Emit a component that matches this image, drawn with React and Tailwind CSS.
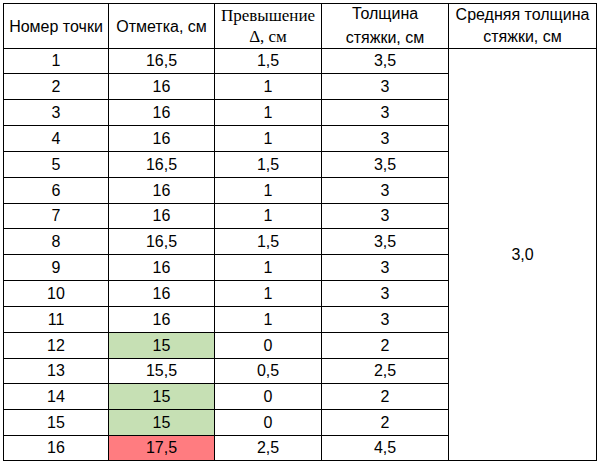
import React from "react";

// Row data: point number, elevation, excess, screed thickness, highlight
const rows = [
  ["1", "16,5", "1,5", "3,5", null],
  ["2", "16", "1", "3", null],
  ["3", "16", "1", "3", null],
  ["4", "16", "1", "3", null],
  ["5", "16,5", "1,5", "3,5", null],
  ["6", "16", "1", "3", null],
  ["7", "16", "1", "3", null],
  ["8", "16,5", "1,5", "3,5", null],
  ["9", "16", "1", "3", null],
  ["10", "16", "1", "3", null],
  ["11", "16", "1", "3", null],
  ["12", "15", "0", "2", "green"],
  ["13", "15,5", "0,5", "2,5", null],
  ["14", "15", "0", "2", "green"],
  ["15", "15", "0", "2", "green"],
  ["16", "17,5", "2,5", "4,5", "red"],
];

const cell =
  "flex items-center justify-center border-r border-b border-black text-center";

export default function App() {
  return (
    <div className="min-h-[463px] w-[600px] bg-white pt-[3px] pl-[3px] font-['Liberation_Sans',Arial,sans-serif] text-[16px] text-black">
      <div className="grid w-[594px] grid-cols-[105px_106px_107px_127px_148px] grid-rows-[45px_25px_26px_26px_26px_26px_26px_25px_26px_26px_26px_26px_26px_25px_26px_26px_25px] border-t border-l border-black">
        <div className={`${cell} pt-[1px]`}>Номер точки</div>
        <div className={`${cell} pt-[1px]`}>Отметка, см</div>
        <div
          className={`${cell} flex-col pb-[1px] font-['Liberation_Serif','Times_New_Roman',serif] text-[17px] leading-[21px]`}
        >
          <span>Превышение</span>
          <span>Δ, см</span>
        </div>
        <div className={`${cell} flex-col pb-[1px] leading-[24px]`}>
          <span>Толщина</span>
          <span>стяжки, см</span>
        </div>
        <div className={`${cell} col-start-5 row-start-1 flex-col leading-[22px]`}>
          <span>Средняя толщина</span>
          <span>стяжки, см</span>
        </div>
        <div className={`${cell} col-start-5 row-start-2 row-span-16`}>3,0</div>
        {rows.map(([n, mark, delta, thick, hl], i) => (
          <React.Fragment key={n}>
            <div className={`${cell} col-start-1`} style={{ gridRowStart: i + 2 }}>
              {n}
            </div>
            <div
              className={`${cell} col-start-2 ${
                hl === "green"
                  ? "bg-[#c6e0b4]"
                  : hl === "red"
                    ? "bg-[#ff7c80]"
                    : ""
              }`}
              style={{ gridRowStart: i + 2 }}
            >
              {mark}
            </div>
            <div className={`${cell} col-start-3`} style={{ gridRowStart: i + 2 }}>
              {delta}
            </div>
            <div className={`${cell} col-start-4`} style={{ gridRowStart: i + 2 }}>
              {thick}
            </div>
          </React.Fragment>
        ))}
      </div>
    </div>
  );
}
